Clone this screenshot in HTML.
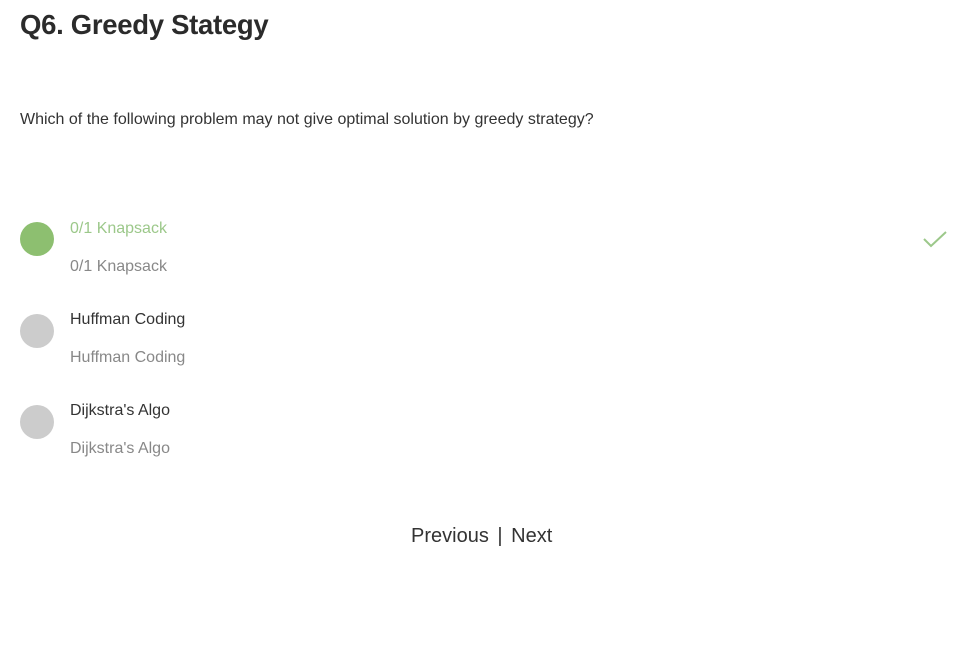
<!DOCTYPE html><html><head><style>
body{margin:0;width:974px;height:659px;background:#fff;font-family:"Liberation Sans",sans-serif;position:relative;overflow:hidden}
.a{position:absolute;white-space:nowrap}
h1{position:absolute;left:20px;top:9px;margin:0;font-size:27.5px;font-weight:bold;color:#2b2b2b;letter-spacing:-0.3px}
.q{left:20px;top:111px;font-size:16px;color:#333}
.c{position:absolute;left:20px;width:34px;height:34px;border-radius:50%;background:#ccc}
.t{left:70px;font-size:16px;color:#333}
.s{left:70px;font-size:16px;color:#888}
</style></head><body>
<h1>Q6. Greedy Stategy</h1>
<div class="a q">Which of the following problem may not give optimal solution by greedy strategy?</div>
<div class="c" style="top:222px;background:#8dbf70"></div>
<div class="a t" style="top:220px;color:#9cc88a">0/1 Knapsack</div>
<div class="a s" style="top:258px">0/1 Knapsack</div>
<svg class="a" style="left:922px;top:230px" width="26" height="18"><path d="M2 9 L9 16 L24 2" fill="none" stroke="#9cc88a" stroke-width="2"/></svg>
<div class="c" style="top:314px"></div>
<div class="a t" style="top:311px">Huffman Coding</div>
<div class="a s" style="top:349px">Huffman Coding</div>
<div class="c" style="top:405px"></div>
<div class="a t" style="top:402px">Dijkstra's Algo</div>
<div class="a s" style="top:440px">Dijkstra's Algo</div>
<div class="a" style="left:411px;top:525px;font-size:20px;color:#333">Previous <span style="margin:0 3px">|</span> Next</div>
</body></html>
